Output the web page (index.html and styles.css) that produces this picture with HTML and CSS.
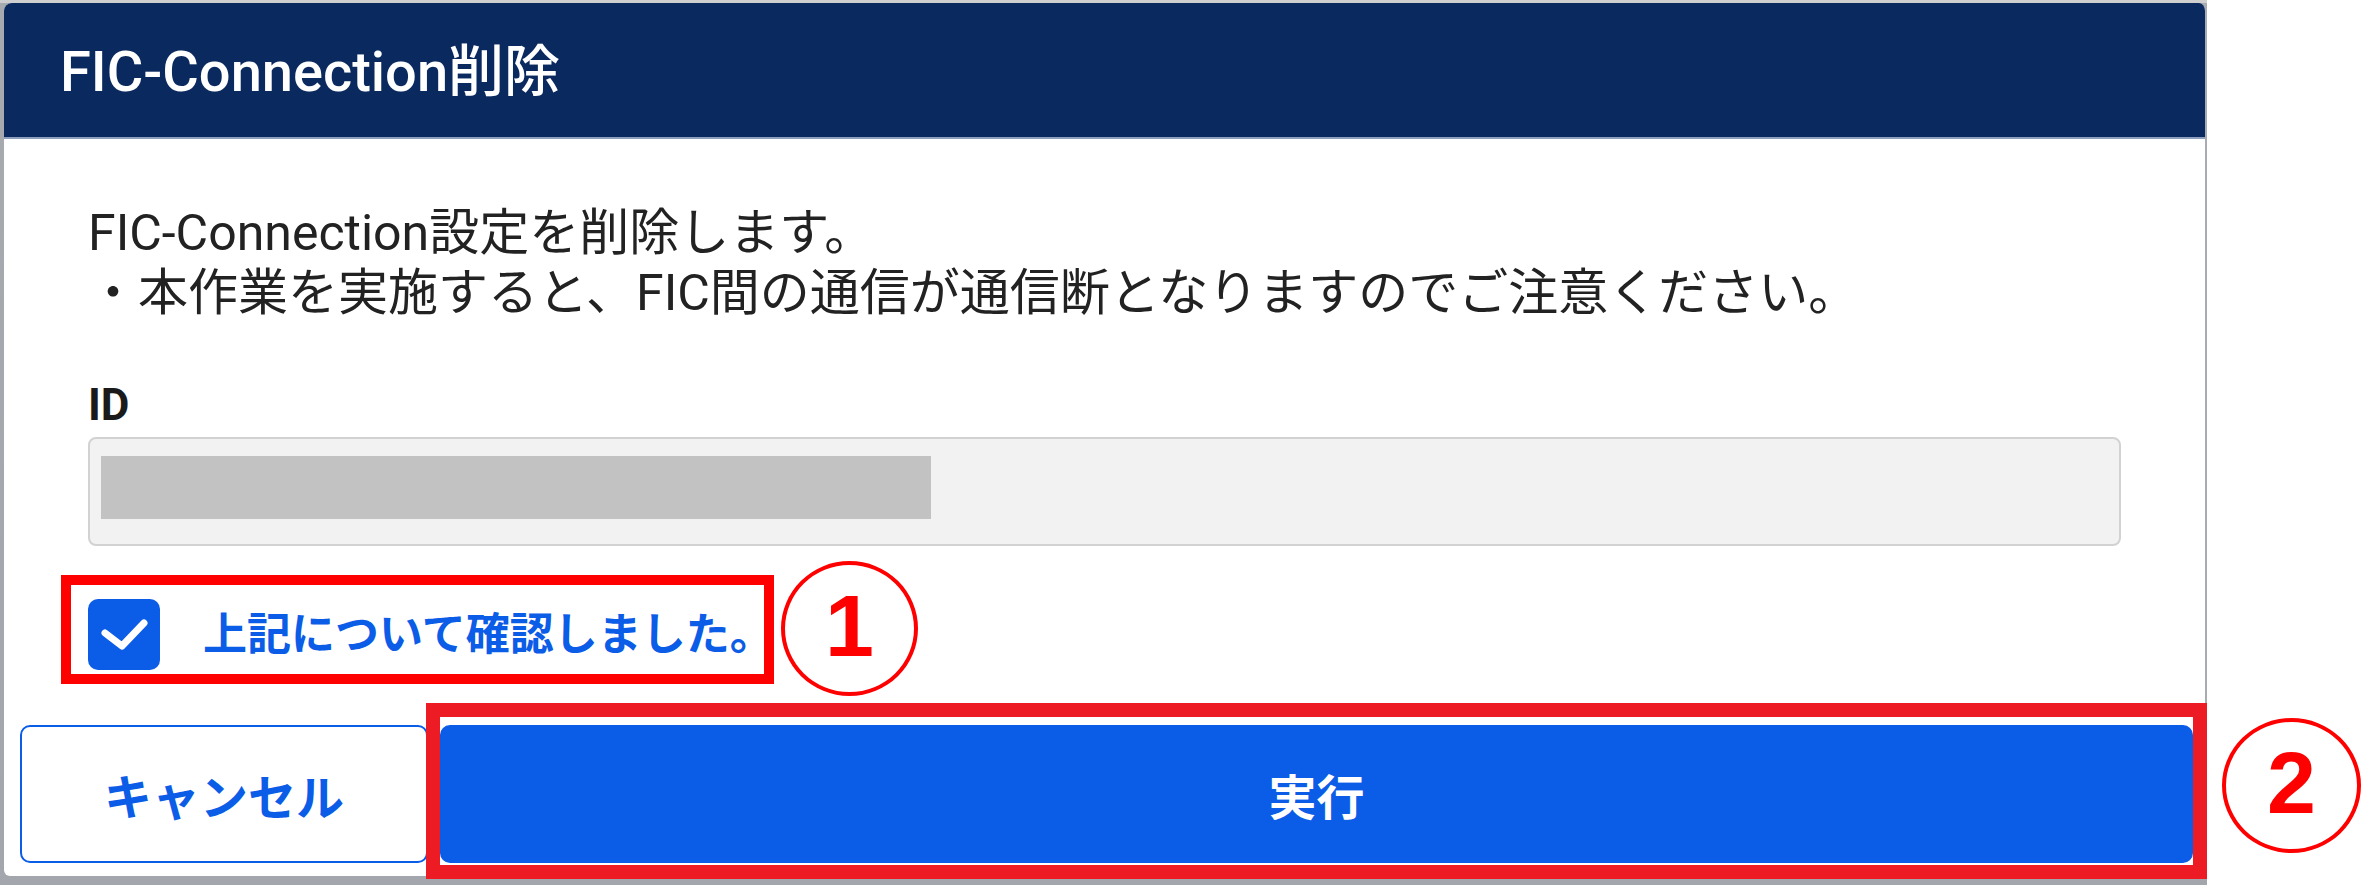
FILE: index.html
```html
<!DOCTYPE html>
<html lang="ja">
<head>
<meta charset="utf-8">
<title>FIC-Connection削除</title>
<link rel="stylesheet" href="styles.css">
</head>
<body>
<div class="stage">
  <div class="backdrop">
    <div class="dialog">
      <div class="dialog-header">
        <h1 class="dialog-title">FIC-Connection削除</h1>
      </div>
      <div class="dialog-body">
        <p class="message">FIC-Connection設定を削除します。<br>・本作業を実施すると、FIC間の通信が通信断となりますのでご注意ください。</p>
        <div class="field">
          <div class="field-label">ID</div>
          <div class="field-input"><span class="redacted"></span></div>
        </div>
        <label class="confirm">
          <span class="checkbox">
            <svg viewBox="0 0 72 71" width="72" height="71"><path d="M17 34L34 47L56 24" fill="none" stroke="#fff" stroke-width="7" stroke-linecap="round" stroke-linejoin="round"/></svg>
          </span>
          <span class="confirm-text">上記について確認しました。</span>
        </label>
      </div>
      <div class="dialog-footer">
        <button class="btn btn-cancel">キャンセル</button>
        <button class="btn btn-primary">実行</button>
      </div>
    </div>
  </div>
  <div class="mark-box mark-box-1"></div>
  <div class="mark-circle mark-circle-1">1</div>
  <div class="mark-box mark-box-2"></div>
  <div class="mark-circle mark-circle-2">2</div>
</div>
</body>
</html>
```
FILE: styles.css
```css
* { box-sizing: border-box; }
html, body { margin: 0; padding: 0; }
body {
  background: #ffffff;
  font-family: Roboto, "Noto Sans CJK JP", sans-serif;
}
.stage {
  position: relative;
  width: 2364px;
  height: 885px;
  overflow: hidden;
  background: #ffffff;
}
.backdrop {
  width: 2207px;
  height: 885px;
  padding: 3px 0 0 4px;
  background: linear-gradient(#cfcfcf 0, #cfcfcf 3px, #a7aaaf 3px, #a3a6ac 100%);
}
.dialog {
  width: 2203px;
  height: 873px;
  background: #ffffff;
  border-right: 2px solid #a9abb2;
  border-radius: 8px 8px 6px 6px;
  overflow: hidden;
  display: flex;
  flex-direction: column;
}
.dialog-header {
  height: 136px;
  flex: none;
  background: #0a295e;
  border-bottom: 2px solid #8e9fbd;
  display: flex;
  align-items: center;
  padding-left: 56px;
}
.dialog-title {
  margin: 0;
  color: #ffffff;
  font-size: 56px;
  font-weight: 500;
  line-height: 1;
  padding-top: 4px;
}
.dialog-body {
  padding: 64px 84px 0 84px;
  flex: 1;
}
.message {
  margin: 0;
  font-size: 50px;
  line-height: 60px;
  color: #222222;
}
.field {
  margin-top: 58px;
}
.field-label {
  font-size: 44px;
  font-weight: 700;
  line-height: 48px;
  color: #1a1a1a;
}
.field-input {
  margin-top: 8px;
  height: 109px;
  background: #f2f2f2;
  border: 2px solid #d2d2d2;
  border-radius: 8px;
  padding: 17px 11px;
}
.redacted {
  display: block;
  width: 830px;
  height: 63px;
  background: #c2c2c2;
}
.confirm {
  margin-top: 53px;
  display: flex;
  align-items: center;
  gap: 43px;
}
.checkbox {
  width: 72px;
  height: 71px;
  flex: none;
  border-radius: 10px;
  background: #0b5ce6;
  display: flex;
}
.confirm-text {
  font-size: 44px;
  font-weight: 700;
  color: #0b5ce6;
  line-height: 1;
}
.dialog-footer {
  display: flex;
  gap: 12px;
  padding: 0 12px 13px 16px;
}
.btn {
  height: 138px;
  border-radius: 10px;
  font-family: Roboto, "Noto Sans CJK JP", sans-serif;
  font-size: 48px;
  font-weight: 700;
  cursor: pointer;
}
.btn-cancel {
  width: 408px;
  background: #ffffff;
  border: 2px solid #0b5ce6;
  color: #0b5ce6;
}
.btn-primary {
  flex: 1;
  background: #0b5ce6;
  border: 2px solid #0b5ce6;
  color: #ffffff;
}
.mark-box {
  position: absolute;
}
.mark-box-1 {
  left: 61px;
  top: 575px;
  width: 713px;
  height: 109px;
  border: 10px solid #ff0000;
}
.mark-box-2 {
  left: 426px;
  top: 703px;
  width: 1781px;
  height: 176px;
  border: 14px solid #ed1c24;
}
.mark-circle {
  position: absolute;
  width: 137px;
  height: 135px;
  border: 4px solid #ff0000;
  border-radius: 50%;
  display: flex;
  align-items: center;
  justify-content: center;
  color: #ff0000;
  font-family: "Liberation Sans", Arial, sans-serif;
  font-weight: 700;
  font-size: 88px;
  line-height: 1;
  padding-bottom: 6px;
}
.mark-circle-1 {
  left: 781px;
  top: 561px;
}
.mark-circle-2 {
  left: 2222px;
  top: 718px;
  width: 139px;
}
```
